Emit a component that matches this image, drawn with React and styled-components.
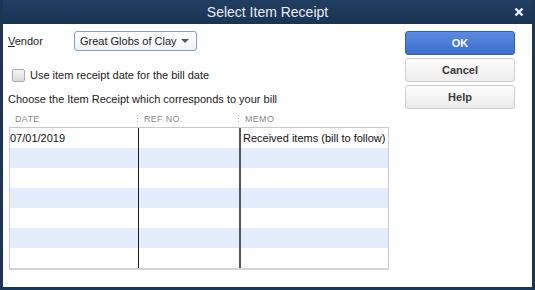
import styled, { createGlobalStyle } from 'styled-components';

const GlobalStyle = createGlobalStyle`
  html, body {
    margin: 0;
    padding: 0;
    background: #ffffff;
  }
  body {
    font-family: "Liberation Sans", Arial, sans-serif;
  }
`;

const Dialog = styled.div`
  width: 535px;
  height: 290px;
  box-sizing: border-box;
  background: #1c3656;
  padding: 0 3px 3px 3px;
  display: flex;
  flex-direction: column;
`;

const TitleBar = styled.div`
  height: 24px;
  flex: 0 0 24px;
  display: flex;
  align-items: center;
  justify-content: center;
  position: relative;
  background: linear-gradient(#203e62, #1a3454);
  color: #e9eef5;
  font-size: 14px;
`;

const CloseButton = styled.span`
  position: absolute;
  right: 6px;
  top: 5px;
  width: 14px;
  height: 14px;
  display: flex;
  align-items: center;
  justify-content: center;
`;

const Body = styled.div`
  flex: 1;
  background: #ffffff;
  display: flex;
  padding: 7px 17px 0 5px;
  gap: 15px;
`;

const LeftPane = styled.div`
  width: 382px;
  display: flex;
  flex-direction: column;
  font-size: 11px;
  color: #1a1a1a;
  white-space: nowrap;
`;

const VendorRow = styled.div`
  display: flex;
  align-items: center;
  height: 20px;
`;

const Label = styled.span`
  width: 66px;
  u {
    text-decoration: underline;
    text-underline-offset: 1px;
  }
`;

const Select = styled.div`
  width: 123px;
  height: 20px;
  box-sizing: border-box;
  border: 1px solid #7f9fc9;
  border-radius: 3px;
  background: linear-gradient(#ffffff, #f1f3f6);
  display: flex;
  align-items: center;
  justify-content: space-between;
  padding: 0 7px 0 5px;
`;

const Arrow = styled.span`
  width: 0;
  height: 0;
  border-left: 4px solid transparent;
  border-right: 4px solid transparent;
  border-top: 4px solid #555;
`;

const CheckRow = styled.label`
  display: flex;
  align-items: center;
  gap: 5px;
  height: 16px;
  margin-top: 16px;
  padding-left: 4px;
`;

const CheckBox = styled.span`
  width: 11px;
  height: 11px;
  border: 1px solid #a9a9a9;
  border-radius: 2px;
  background: linear-gradient(#f4f4f4, #dcdcdc);
`;

const Instruction = styled.div`
  height: 16px;
  line-height: 16px;
  margin-top: 8px;
`;

const Table = styled.div`
  margin-top: 3px;
  margin-left: 1px;
  width: 380px;
`;

const columns = '128px 101px 1fr';

const HeaderRow = styled.div`
  display: grid;
  grid-template-columns: ${columns};
  height: 17px;
  border-bottom: 1px solid #c9c9c9;
`;

const HeaderCell = styled.div`
  display: flex;
  align-items: center;
  padding-left: ${(p) => (p.$first ? 6 : 0)}px;
  font-size: 9px;
  color: #8a8a8a;
  letter-spacing: 0.3px;
`;

const Grip = styled.span`
  width: 1px;
  height: 8px;
  margin: 0 6px 0 0;
  background: repeating-linear-gradient(#9a9a9a 0 1px, transparent 1px 3px);
`;

const GridBody = styled.div`
  border: 1px solid #cccccc;
  border-top: none;
  border-bottom: 2px solid #d4d4d4;
`;

const Row = styled.div`
  display: grid;
  grid-template-columns: ${columns};
  height: 20px;
  background: ${(p) => (p.$alt ? '#e3edfb' : '#ffffff')};
`;

const Cell = styled.div`
  display: flex;
  align-items: center;
  padding-left: ${(p) => (p.$first ? 0 : 2)}px;
  font-size: 11px;
  color: #111;
  overflow: hidden;
  border-left: ${(p) => p.$line || 'none'};
`;

const ButtonColumn = styled.div`
  display: flex;
  flex-direction: column;
  gap: 3px;
  width: 110px;
`;

const Button = styled.button`
  height: 24px;
  box-sizing: border-box;
  border-radius: 3px;
  font-family: "Liberation Sans", Arial, sans-serif;
  font-size: 11px;
  font-weight: bold;
  padding: 0;
  border: 1px solid ${(p) => (p.$primary ? '#2d5fb5' : '#cfcfcf')};
  color: ${(p) => (p.$primary ? '#ffffff' : '#3a3a3a')};
  background: ${(p) =>
    p.$primary
      ? 'linear-gradient(#5a8be0, #3a6fcd)'
      : 'linear-gradient(#fdfdfd, #ececec)'};
`;

const rows = [
  { date: '07/01/2019', ref: '', memo: 'Received items (bill to follow)' },
  {}, {}, {}, {}, {}, {},
];

const App = () => {
  return (
    <>
      <GlobalStyle />
      <Dialog>
        <TitleBar>
          Select Item Receipt
          <CloseButton>
            <svg width="10" height="10" viewBox="0 0 10 10">
              <path d="M1.5 1.5 L8.5 8.5 M8.5 1.5 L1.5 8.5" stroke="#e9eef5" strokeWidth="2.4" />
            </svg>
          </CloseButton>
        </TitleBar>
        <Body>
          <LeftPane>
            <VendorRow>
              <Label>
                <u>V</u>endor
              </Label>
              <Select>
                Great Globs of Clay
                <Arrow />
              </Select>
            </VendorRow>
            <CheckRow>
              <CheckBox />
              Use item receipt date for the bill date
            </CheckRow>
            <Instruction>Choose the Item Receipt which corresponds to your bill</Instruction>
            <Table>
              <HeaderRow>
                <HeaderCell $first>DATE</HeaderCell>
                <HeaderCell>
                  <Grip />
                  REF NO.
                </HeaderCell>
                <HeaderCell>
                  <Grip />
                  MEMO
                </HeaderCell>
              </HeaderRow>
              <GridBody>
                {rows.map((r, i) => (
                  <Row key={i} $alt={i % 2 === 1}>
                    <Cell $first>{r.date}</Cell>
                    <Cell $line="1px solid #1e1e1e">{r.ref}</Cell>
                    <Cell $line="2px solid #555555">{r.memo}</Cell>
                  </Row>
                ))}
              </GridBody>
            </Table>
          </LeftPane>
          <ButtonColumn>
            <Button $primary>OK</Button>
            <Button>Cancel</Button>
            <Button>Help</Button>
          </ButtonColumn>
        </Body>
      </Dialog>
    </>
  );
};

export default App;
